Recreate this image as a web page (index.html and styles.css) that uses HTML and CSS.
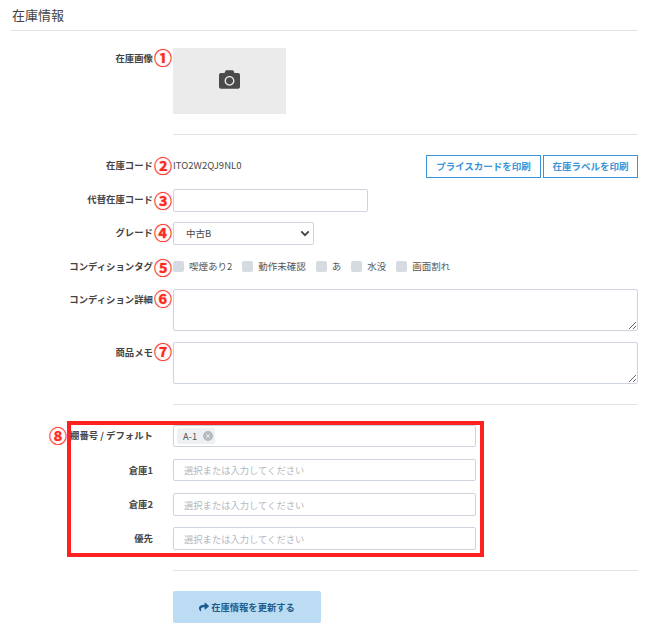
FILE: index.html
```html
<!DOCTYPE html>
<html lang="ja">
<head>
<meta charset="utf-8">
<title>在庫情報</title>
<link rel="stylesheet" href="styles.css">
</head>
<body>
<main class="page">
  <h2 class="title">在庫情報</h2>

  <div class="row row-image">
    <div class="label">在庫画像<span class="num">①</span></div>
    <div class="photo">
      <svg class="camera" viewBox="0 0 512 512" aria-hidden="true"><path d="M512 144v288c0 26.5-21.5 48-48 48H48c-26.5 0-48-21.5-48-48V144c0-26.5 21.5-48 48-48h88l12.3-32.9c7-18.7 24.9-31.1 44.9-31.1h125.5c20 0 37.9 12.4 44.9 31.1L376 96h88c26.5 0 48 21.5 48 48zM376 288c0-66.2-53.8-120-120-120s-120 53.8-120 120 53.8 120 120 120 120-53.8 120-120zm-32 0c0 48.5-39.5 88-88 88s-88-39.5-88-88 39.5-88 88-88 88 39.5 88 88z"/></svg>
    </div>
  </div>

  <hr class="rule">

  <div class="row row-code">
    <div class="label">在庫コード<span class="num num-down1">②</span></div>
    <div class="code-line">
      <span class="code">ITO2W2QJ9NL0</span>
      <div class="actions">
        <button class="outline outline-price" type="button">プライスカードを印刷</button>
        <button class="outline outline-stock" type="button">在庫ラベルを印刷</button>
      </div>
    </div>
  </div>

  <div class="row row-tight">
    <div class="label">代替在庫コード<span class="num num-down2">③</span></div>
    <input class="field field-alt" type="text">
  </div>

  <div class="row row-snug">
    <div class="label">グレード<span class="num num-down1">④</span></div>
    <div class="select-wrap">
      <select class="field field-select"><option>中古B</option></select>
      <svg class="chevron" viewBox="0 0 12 8" aria-hidden="true"><path d="M1.5 1.5 6 6l4.5-4.5"/></svg>
    </div>
  </div>

  <div class="row row-snug row-tags">
    <div class="label">コンディションタグ<span class="num num-down3">⑤</span></div>
    <div class="tags">
      <label class="tag"><span class="box"></span>喫煙あり2</label>
      <label class="tag"><span class="box"></span>動作未確認</label>
      <label class="tag"><span class="box"></span>あ</label>
      <label class="tag"><span class="box"></span>水没</label>
      <label class="tag"><span class="box"></span>画面割れ</label>
    </div>
  </div>

  <div class="row row-tight">
    <div class="label">コンディション詳細<span class="num">⑥</span></div>
    <textarea class="field area"></textarea>
  </div>

  <div class="row row-tight">
    <div class="label">商品メモ<span class="num">⑦</span></div>
    <textarea class="field area"></textarea>
  </div>

  <hr class="rule">

  <section class="shelves">
    <div class="highlight"></div>
    <div class="row">
      <div class="label">棚番号 / デフォルト<span class="num num-down1 num-shelf">⑧</span></div>
      <div class="field shelf shelf-chip">
        <span class="chip">A-1<svg class="chip-x" viewBox="0 0 10 10" aria-hidden="true"><circle cx="5" cy="5" r="5"/><path d="M3.2 3.2l3.6 3.6M6.8 3.2 3.2 6.8"/></svg></span>
      </div>
    </div>
    <div class="row row-shelf">
      <div class="label">倉庫1</div>
      <input class="field shelf" type="text" placeholder="選択または入力してください">
    </div>
    <div class="row row-shelf">
      <div class="label">倉庫2</div>
      <input class="field shelf shelf-tall" type="text" placeholder="選択または入力してください">
    </div>
    <div class="row row-shelf row-shelf-last">
      <div class="label">優先</div>
      <input class="field shelf shelf-tall" type="text" placeholder="選択または入力してください">
    </div>
  </section>

  <hr class="rule">

  <div class="row row-submit">
    <div></div>
    <div>
      <button class="submit" type="button">
        <svg class="share" viewBox="0 0 512 512" aria-hidden="true"><path d="M503.691 189.836L327.687 37.851C312.281 24.546 288 35.347 288 56.015v80.053C127.371 137.907 0 170.1 0 322.326c0 61.441 39.581 122.309 83.333 154.132 13.653 9.931 33.111-2.533 28.077-18.631C66.066 312.814 132.917 274.316 288 272.085V360c0 20.7 24.3 31.453 39.687 18.164l176.004-152c11.071-9.562 11.086-26.753 0-36.328z"/></svg>在庫情報を更新する
      </button>
    </div>
  </div>
</main>
</body>
</html>
```
FILE: styles.css
```css
* { box-sizing: border-box; }

html, body {
  margin: 0;
  background: #fff;
}

body {
  font-family: "Noto Sans CJK JP", "Noto Sans", sans-serif;
  font-size: 9.4px;
  color: #4a4a4a;
}

.page {
  width: 652px;
  height: 636px;
  padding: 0 14px 0 11px;
  overflow: hidden;
}

.title {
  height: 31px;
  margin: 0;
  padding-left: 1px;
  border-bottom: 1px solid #e0e3ea;
  font-size: 13px;
  font-weight: 400;
  line-height: 30px;
  color: #444;
}

.row {
  display: grid;
  grid-template-columns: 142px 1fr;
  column-gap: 20px;
  align-items: start;
}

.row-image { margin-top: 17px; }
.row-code { margin-top: 20px; }
.row-tight { margin-top: 11px; }
.row-snug { margin-top: 10px; }
.row-shelf { margin-top: 12px; }
.row-shelf-last { margin-top: 11px; }
.row-submit { margin-top: 20px; }

.label {
  position: relative;
  text-align: right;
  font-weight: 700;
  line-height: 20px;
  color: #444;
}

.row-tags .label { line-height: 22px; }
.row-shelf .label { line-height: 22px; }

.num {
  position: absolute;
  left: 142px;
  top: -1px;
  width: 20px;
  text-align: center;
  font-size: 18px;
  font-weight: 700;
  line-height: 20px;
  color: #fb2a1e;
  -webkit-text-stroke: 0.2px #fb2a1e;
  text-shadow: 0 0 2px #ffb3ad;
}

.num-down1 { top: 0; }
.num-down2 { top: 1px; }
.num-down3 { top: 2px; }
.num-shelf { left: 37px; }

.photo {
  display: flex;
  align-items: center;
  justify-content: center;
  width: 113px;
  height: 66px;
  background: #ebebeb;
}

.camera {
  width: 21px;
  height: 21px;
  margin-bottom: 4px;
  fill: #4a4a4a;
}

.rule {
  height: 1px;
  margin: 20px 0 0 162px;
  border: 0;
  background: #e0e3ea;
}

.code-line {
  display: flex;
  align-items: center;
  justify-content: space-between;
  height: 23px;
}

.code {
  margin-bottom: 3px;
  font-size: 9.5px;
}

.actions {
  display: flex;
  gap: 2px;
}

.outline {
  height: 23px;
  padding: 0 0 2px;
  border: 1px solid #3a94d8;
  background: #fff;
  color: #3a94d8;
  font: 700 9.5px "Noto Sans CJK JP", sans-serif;
}

.outline-price { width: 115px; }
.outline-stock { width: 95px; }

.field {
  display: block;
  margin: 0;
  border: 1px solid #ced4de;
  border-radius: 2px;
  background: #fff;
  color: #4a4a4a;
  font: 400 9.3px "Noto Sans CJK JP", sans-serif;
  outline: 0;
}

.field-alt {
  width: 195px;
  height: 23px;
}

.select-wrap {
  position: relative;
  width: 141px;
  height: 23px;
}

.field-select {
  width: 100%;
  height: 100%;
  padding: 0 0 2px 12px;
  font-size: 9.5px;
  appearance: none;
}

.chevron {
  position: absolute;
  right: 4px;
  top: 8px;
  width: 10px;
  height: 7px;
  fill: none;
  stroke: #444;
  stroke-width: 2.2;
  pointer-events: none;
}

.tags {
  display: flex;
  align-items: center;
  gap: 10px;
  height: 23px;
}

.tag {
  display: flex;
  align-items: center;
  gap: 5px;
  padding-bottom: 2px;
  font-size: 9.5px;
  color: #555;
}

.box {
  width: 11px;
  height: 11px;
  margin-top: 2px;
  border-radius: 2px;
  background: #d5dbe1;
}

.area {
  width: 465px;
  height: 42px;
  resize: vertical;
}

.shelves {
  position: relative;
  margin-top: 20px;
}

.highlight {
  position: absolute;
  left: 56px;
  top: -4px;
  width: 417px;
  height: 136px;
  border: 4px solid #ff2020;
  pointer-events: none;
}

.shelf {
  width: 303px;
  height: 22px;
  padding: 0 10px;
}

.shelf-tall { height: 23px; }

.shelf::placeholder {
  color: #b4b8c0;
  opacity: 1;
}

.shelf-chip {
  display: flex;
  align-items: center;
  padding: 0 3px;
}

.chip {
  display: flex;
  align-items: center;
  justify-content: space-between;
  width: 38px;
  height: 16px;
  padding: 0 2px 0 6px;
  border-radius: 2px;
  background: #eef0f3;
  color: #555;
}

.chip-x {
  width: 10px;
  height: 10px;
}

.chip-x circle { fill: #b5b9c0; }

.chip-x path {
  fill: none;
  stroke: #eef0f3;
  stroke-width: 1;
}

.submit {
  display: flex;
  align-items: center;
  justify-content: center;
  gap: 2px;
  width: 148px;
  height: 32px;
  padding: 0;
  border: 0;
  border-radius: 2px;
  background: #bcdcf3;
  color: #1c5c8e;
  font: 700 9.3px "Noto Sans CJK JP", sans-serif;
}

.share {
  width: 10px;
  height: 10px;
  fill: #1c5c8e;
}
```
